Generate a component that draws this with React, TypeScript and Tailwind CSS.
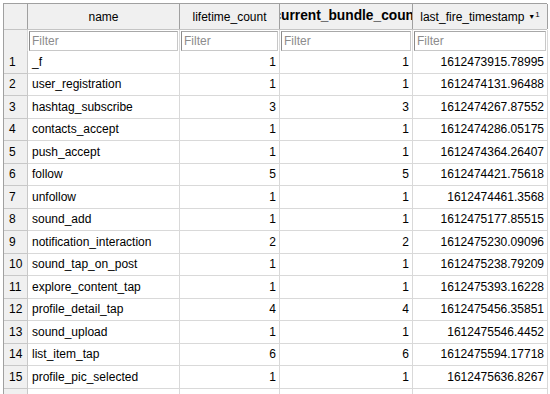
import React from 'react';

const rows: [string, number, number, string][] = [
  ['_f', 1, 1, '1612473915.78995'],
  ['user_registration', 1, 1, '1612474131.96488'],
  ['hashtag_subscribe', 3, 3, '1612474267.87552'],
  ['contacts_accept', 1, 1, '1612474286.05175'],
  ['push_accept', 1, 1, '1612474364.26407'],
  ['follow', 5, 5, '1612474421.75618'],
  ['unfollow', 1, 1, '1612474461.3568'],
  ['sound_add', 1, 1, '1612475177.85515'],
  ['notification_interaction', 2, 2, '1612475230.09096'],
  ['sound_tap_on_post', 1, 1, '1612475238.79209'],
  ['explore_content_tap', 1, 1, '1612475393.16228'],
  ['profile_detail_tap', 4, 4, '1612475456.35851'],
  ['sound_upload', 1, 1, '1612475546.4452'],
  ['list_item_tap', 6, 6, '1612475594.17718'],
  ['profile_pic_selected', 1, 1, '1612475636.8267'],
];

const cols = 'grid grid-cols-[24px_152px_100px_133px_135px]';

function FilterBox() {
  return (
    <div className="h-full px-[1px] py-[1px] border-r border-[#d9d9d9] bg-white">
      <div className="h-full border border-[#c8c8c8] border-l-[#8a8a8a] border-t-[#a8a8a8] bg-white flex items-center pl-[2px] text-[12px] text-[#8c8c8c]">
        Filter
      </div>
    </div>
  );
}

export default function App() {
  return (
    <div className="w-[550px] h-[394px] overflow-hidden bg-white pt-[3px] pl-[3px] font-['Liberation_Sans',Arial,sans-serif] text-[12px] text-black">
      <div className="w-[544px] border-t border-l border-[#a0a0a0]">
        {/* header */}
        <div className={`${cols} h-[26px] bg-[#f0f0f0] border-b border-[#c4c4c4]`}>
          <div className="border-r border-[#a0a0a0]" />
          <div className="border-r border-[#a0a0a0] flex items-center justify-center">name</div>
          <div className="border-r border-[#a0a0a0] flex items-center justify-center whitespace-nowrap">lifetime_count</div>
          <div className="border-r border-[#a0a0a0] flex items-center justify-center overflow-hidden whitespace-nowrap">
            <span className="font-bold text-[13.75px]">current_bundle_count</span>
          </div>
          <div className="border-r border-[#a0a0a0] flex items-center justify-center whitespace-nowrap">
            last_fire_timestamp
            <span className="ml-[4px] text-[7px] leading-none">▼</span>
            <span className="text-[8px] leading-none relative -top-[2px]">1</span>
          </div>
        </div>
        {/* filter row */}
        <div className={`${cols} h-[21px]`}>
          <div className="bg-[#f0f0f0] border-r border-b border-[#d9d9d9]" />
          <FilterBox />
          <FilterBox />
          <FilterBox />
          <FilterBox />
        </div>
        {rows.map(([name, life, cur, ts], i) => (
          <div key={i} className={`${cols} h-[22.5px]`}>
            <div className="bg-[#f0f0f0] border-r border-b border-[#c8c8c8] flex items-center pl-[5px]">{i + 1}</div>
            <div className="border-r border-b border-[#d9d9d9] flex items-center pl-[4px] whitespace-nowrap overflow-hidden">{name}</div>
            <div className="border-r border-b border-[#d9d9d9] flex items-center justify-end pr-[3px]">{life}</div>
            <div className="border-r border-b border-[#d9d9d9] flex items-center justify-end pr-[3px]">{cur}</div>
            <div className="border-r border-b border-[#d9d9d9] flex items-center justify-end pr-[3px]">{ts}</div>
          </div>
        ))}
        <div className={`${cols} h-[22.5px]`}>
          <div className="bg-[#f0f0f0] border-r border-[#c8c8c8]" />
          <div className="border-r border-[#d9d9d9]" />
          <div className="border-r border-[#d9d9d9]" />
          <div className="border-r border-[#d9d9d9]" />
          <div className="border-r border-[#d9d9d9]" />
        </div>
      </div>
    </div>
  );
}
